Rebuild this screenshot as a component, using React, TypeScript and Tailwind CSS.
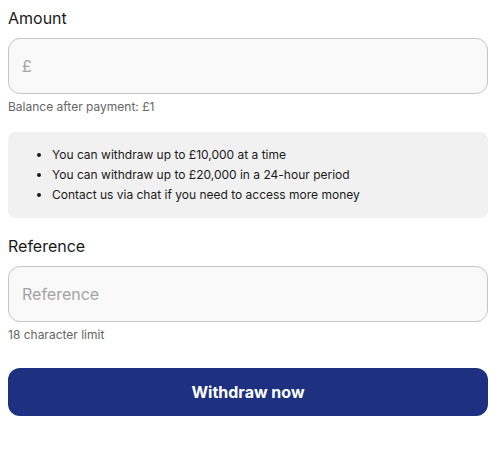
import { useState } from "react";

const limits = [
  "You can withdraw up to £10,000 at a time",
  "You can withdraw up to £20,000 in a 24-hour period",
  "Contact us via chat if you need to access more money",
];

const App = () => {
  const [amount, setAmount] = useState("");
  const [reference, setReference] = useState("");

  return (
    <div className="w-[496px] px-2 pt-[6px] font-['Inter',sans-serif] text-[#1a1a1a]">
      {/* amount field */}
      <label className="block text-base leading-6">Amount</label>
      <input
        className="mt-2 block h-[56px] w-full rounded-xl border border-[#c4c4c4] bg-[#f9f9f9] px-[13px] text-base outline-none placeholder:text-[#a3a3a3]"
        placeholder="£"
        value={amount}
        onChange={(e) => setAmount(e.target.value)}
      />
      <p className="mt-[5px] text-xs leading-4 text-[#666]">Balance after payment: £1</p>

      {/* withdrawal limits */}
      <div className="mt-[17px] rounded-lg bg-[#f1f1f1] pt-[13px] pb-[13px] pl-[32px]">
        <ul className="list-disc pl-[12px] text-xs leading-5">
          {limits.map((l, i) => (
            <li key={i}>{l}</li>
          ))}
        </ul>
      </div>

      {/* reference field */}
      <label className="mt-[16px] block text-base leading-6">Reference</label>
      <input
        className="mt-2 block h-[56px] w-full rounded-xl border border-[#c4c4c4] bg-[#f9f9f9] px-[13px] text-base outline-none placeholder:text-[#a3a3a3]"
        placeholder="Reference"
        maxLength={18}
        value={reference}
        onChange={(e) => setReference(e.target.value)}
      />
      <p className="mt-[5px] text-xs leading-4 text-[#666]">18 character limit</p>

      <button className="mt-[25px] h-[48px] w-full rounded-xl bg-[#1d3180] text-base font-bold text-white">
        Withdraw now
      </button>
    </div>
  );
};

export default App;
